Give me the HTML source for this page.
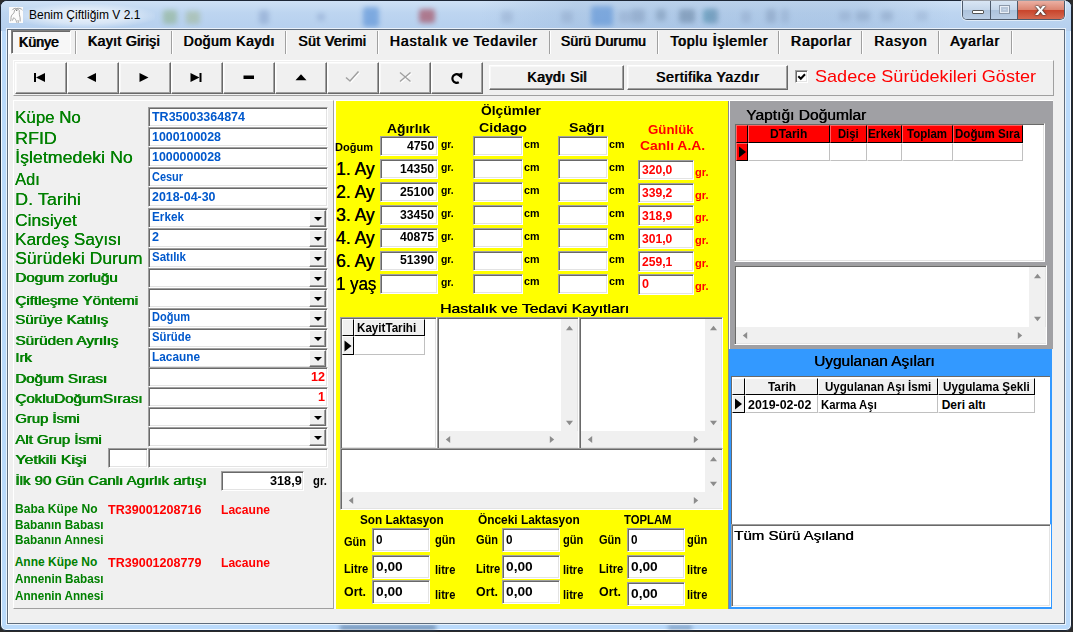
<!DOCTYPE html>
<html lang="tr"><head><meta charset="utf-8"><title>Benim Çiftliğim V 2.1</title>
<style>
html,body{margin:0;padding:0;}
body{width:1073px;height:632px;overflow:hidden;position:relative;background:#2b2b2b;font-family:"Liberation Sans",sans-serif;}
div{position:absolute;box-sizing:border-box;}
.t{position:absolute;white-space:nowrap;transform-origin:0 50%;display:block;}
.win{background:#badafb;border:1px solid #1d2736;border-radius:7px 7px 6px 6px;box-shadow:inset 0 0 0 1px rgba(255,255,255,.85);overflow:hidden;}
.client{background:#f0f0f0;border:1px solid #5f6c7c;box-shadow:0 0 0 1px rgba(255,255,255,.7);}
.sunk{background:#fff;border:1px solid;border-color:#a0a0a0 #fff #fff #a0a0a0;box-shadow:inset 1px 1px 0 #696969,inset -1px -1px 0 #e3e3e3;}
.raised{background:#f0f0f0;border:1px solid;border-color:#fff #696969 #696969 #fff;box-shadow:inset -1px -1px 0 #a0a0a0;}
.btn{background:#f0f0f0;border:1px solid;border-color:#fff #696969 #696969 #fff;box-shadow:inset -1px -1px 0 #a0a0a0,inset 1px 1px 0 #f8f8f8;}
.cb{background:#f0f0f0;border:1px solid;border-color:#fff #696969 #696969 #fff;box-shadow:inset -1px -1px 0 #a0a0a0;}
.cb:after{content:"";position:absolute;left:4px;top:6px;border:4px solid transparent;border-top:4px solid #000;border-bottom:0;}
.panel{border:1px solid;border-color:#fff #a0a0a0 #a0a0a0 #fff;}
.hcell{background:#f0f0f0;border:1px solid;border-color:#fff #000 #000 #fff;}
.cell{background:#fff;border:1px solid;border-color:#fff #c0c0c0 #c0c0c0 #fff;}
.sb{background:#f0f0f0;}

</style></head>
<body>
<div class="win" style="left:0px;top:0px;width:1072px;height:631px;"><div style="left:0;top:0;width:1072px;height:30px;background:linear-gradient(180deg,#cfe1f5 0%,#bdd5f0 40%,#b5cfee 100%);"></div><div style="left:480px;top:0;width:470px;height:30px;background:linear-gradient(90deg,rgba(150,180,215,0),rgba(150,180,215,.35) 20%,rgba(150,180,215,.35) 80%,rgba(150,180,215,0));"></div><div style="left:162px;top:9px;width:14px;height:14px;background:#6f9a4a;opacity:0.35;filter:blur(2.5px);border-radius:3px;"></div><div style="left:185px;top:10px;width:14px;height:13px;background:#8aa04a;opacity:0.3;filter:blur(2.5px);border-radius:3px;"></div><div style="left:258px;top:9px;width:10px;height:14px;background:#6a85b5;opacity:0.35;filter:blur(2.5px);border-radius:3px;"></div><div style="left:316px;top:12px;width:8px;height:8px;background:#6a85b5;opacity:0.3;filter:blur(2.5px);border-radius:3px;"></div><div style="left:362px;top:6px;width:16px;height:20px;background:#3f7fd0;opacity:0.5;filter:blur(2.5px);border-radius:3px;"></div><div style="left:418px;top:8px;width:16px;height:14px;background:#a03040;opacity:0.55;filter:blur(2.5px);border-radius:3px;"></div><div style="left:500px;top:10px;width:12px;height:12px;background:#7f95b8;opacity:0.3;filter:blur(2.5px);border-radius:3px;"></div><div style="left:560px;top:10px;width:12px;height:12px;background:#7f95b8;opacity:0.3;filter:blur(2.5px);border-radius:3px;"></div><div style="left:618px;top:10px;width:12px;height:12px;background:#7f95b8;opacity:0.3;filter:blur(2.5px);border-radius:3px;"></div><div style="left:590px;top:5px;width:22px;height:20px;background:#3f7fd0;opacity:0.45;filter:blur(2.5px);border-radius:3px;"></div><div style="left:630px;top:8px;width:14px;height:14px;background:#6f86a8;opacity:0.35;filter:blur(2.5px);border-radius:3px;"></div><div style="left:655px;top:8px;width:10px;height:12px;background:#5f7a98;opacity:0.35;filter:blur(2.5px);border-radius:3px;"></div><div style="left:678px;top:8px;width:16px;height:14px;background:#4f6a88;opacity:0.4;filter:blur(2.5px);border-radius:3px;"></div><div style="left:702px;top:8px;width:14px;height:14px;background:#2f7a9a;opacity:0.45;filter:blur(2.5px);border-radius:3px;"></div><div style="left:740px;top:10px;width:10px;height:12px;background:#7f95b8;opacity:0.3;filter:blur(2.5px);border-radius:3px;"></div><div style="left:765px;top:8px;width:10px;height:14px;background:#6f86a8;opacity:0.35;filter:blur(2.5px);border-radius:3px;"></div><div style="left:855px;top:10px;width:14px;height:10px;background:#6f86a8;opacity:0.3;filter:blur(2.5px);border-radius:3px;"></div><div style="left:880px;top:10px;width:12px;height:10px;background:#6f86a8;opacity:0.3;filter:blur(2.5px);border-radius:3px;"></div><div style="left:708px;top:8px;width:10px;height:14px;background:#7f95b8;opacity:0.3;filter:blur(2.5px);border-radius:3px;"></div><div style="left:780px;top:8px;width:8px;height:14px;background:#7f95b8;opacity:0.3;filter:blur(2.5px);border-radius:3px;"></div><div style="left:838px;top:10px;width:12px;height:10px;background:#7f95b8;opacity:0.3;filter:blur(2.5px);border-radius:3px;"></div><div style="left:915px;top:10px;width:12px;height:10px;background:#7f95b8;opacity:0.25;filter:blur(2.5px);border-radius:3px;"></div><div style="left:14px;top:3px;width:140px;height:24px;background:radial-gradient(ellipse at center,rgba(255,255,255,.75) 0%,rgba(255,255,255,.45) 45%,rgba(255,255,255,0) 75%);"></div></div>
<div class="" style="left:962px;top:1px;width:103px;height:19px;border:1px solid #4d5a6b;border-top:none;border-radius:0 0 5px 5px;overflow:hidden;background:#c3d6ec;box-shadow:0 0 0 1px rgba(255,255,255,.55);"><div style="left:0;top:0;width:28px;height:19px;background:linear-gradient(180deg,#d9e6f4 0%,#c6d7ea 45%,#adc3dc 50%,#bccfe6 100%);border-right:1px solid #4d5a6b;"></div><div style="left:28px;top:0;width:27px;height:19px;background:linear-gradient(180deg,#d9e6f4 0%,#c6d7ea 45%,#adc3dc 50%,#bccfe6 100%);border-right:1px solid #4d5a6b;"></div><div style="left:55px;top:0;width:47px;height:19px;background:linear-gradient(180deg,#ebb0a3 0%,#dc8672 45%,#c9452c 50%,#d66e55 100%);"></div><div style="left:9px;top:9px;width:12px;height:4px;background:#fff;border:1px solid #555;border-radius:1px;"></div><div style="left:36px;top:4px;width:11px;height:9px;border:1px solid #8c99aa;box-shadow:inset 0 0 0 1px #e8eef6, inset 0 0 0 3px #b7c6d9;"></div></div>
<span class="t" style="left:1034.50px;top:1px;font-size:16px;line-height:17px;color:#fff;font-weight:bold;transform:scaleX(1.2362);text-shadow:0 0 1px #333,0 0 1px #333,0 0 2px #333;">x</span>
<svg style="position:absolute;left:9px;top:7px" width="14" height="16" viewBox="0 0 14 16"><rect x="0" y="0" width="14" height="16" fill="#fbfbfb"/><path d="M7.5 1.5C6 1 4 1.8 3.2 3.2M7.5 1.5C9.5 .8 12.5 1.6 13.5 3.2M6 2.8C7 1.6 9.5 1.8 10.2 3.4C10.6 5 10 6.2 10.4 7.5C11 9.5 11.4 12 11.2 14.5M5.8 3C5 4.6 5.4 5.6 4.4 6.6C2.6 7.6 1.8 9.6 2 12.2L1.6 14.2M4.6 10.6L3.4 13.6M5.2 10.8C6 12 7 12.6 7.4 14.4L8 15.8M9 13L9.4 15.8" fill="none" stroke="#8e8e8e" stroke-width=".8"/><circle cx="7.7" cy="3.4" r=".7" fill="#777"/></svg>
<span class="t" style="left:29.00px;top:8px;font-size:12px;line-height:14px;color:#000;">Benim Çiftliğim V 2.1</span>
<div class="" style="left:340px;top:625px;width:96px;height:5px;background:rgba(55,85,125,.55);filter:blur(2px);"></div>
<div class="" style="left:668px;top:625px;width:24px;height:5px;background:rgba(55,85,125,.4);filter:blur(2px);"></div>
<div class="client" style="left:7px;top:29px;width:1058px;height:595px;"></div>
<div class="" style="left:8px;top:30px;width:1px;height:593px;background:#fff;"></div>
<div class="" style="left:8px;top:30px;width:3px;height:24px;background:#fff;"></div>
<div class="" style="left:11px;top:30px;width:60px;height:24px;border:1px solid;border-color:#808080 #fff #fff #808080;box-shadow:inset 1px 1px 0 #696969;background:#f7f7f7;"></div>
<span class="t" style="left:18.60px;top:34px;font-size:14px;line-height:16px;color:#000;letter-spacing:0.076px;text-shadow:0.8px 0 0 #000;">Künye</span>
<span class="t" style="left:87.60px;top:33px;font-size:14px;line-height:16px;color:#000;letter-spacing:0.366px;text-shadow:0.8px 0 0 #000;">Kayıt Girişi</span>
<span class="t" style="left:183.20px;top:33px;font-size:14px;line-height:16px;color:#000;letter-spacing:0.598px;text-shadow:0.8px 0 0 #000;">Doğum Kaydı</span>
<span class="t" style="left:298.00px;top:33px;font-size:14px;line-height:16px;color:#000;letter-spacing:0.422px;text-shadow:0.8px 0 0 #000;">Süt Verimi</span>
<span class="t" style="left:389.50px;top:33px;font-size:14px;line-height:16px;color:#000;letter-spacing:0.914px;text-shadow:0.8px 0 0 #000;">Hastalık ve Tedaviler</span>
<span class="t" style="left:560.40px;top:33px;font-size:14px;line-height:16px;color:#000;letter-spacing:0.195px;text-shadow:0.8px 0 0 #000;">Sürü Durumu</span>
<span class="t" style="left:670.00px;top:33px;font-size:14px;line-height:16px;color:#000;letter-spacing:0.833px;text-shadow:0.8px 0 0 #000;">Toplu İşlemler</span>
<span class="t" style="left:790.60px;top:33px;font-size:14px;line-height:16px;color:#000;letter-spacing:0.930px;text-shadow:0.8px 0 0 #000;">Raporlar</span>
<span class="t" style="left:874.00px;top:33px;font-size:14px;line-height:16px;color:#000;letter-spacing:0.946px;text-shadow:0.8px 0 0 #000;">Rasyon</span>
<span class="t" style="left:950.00px;top:33px;font-size:14px;line-height:16px;color:#000;letter-spacing:0.785px;text-shadow:0.8px 0 0 #000;">Ayarlar</span>
<div class="" style="left:75px;top:31px;width:2px;height:23px;border-left:1px solid #a0a0a0;border-right:1px solid #fff;"></div>
<div class="" style="left:171px;top:31px;width:2px;height:23px;border-left:1px solid #a0a0a0;border-right:1px solid #fff;"></div>
<div class="" style="left:285px;top:31px;width:2px;height:23px;border-left:1px solid #a0a0a0;border-right:1px solid #fff;"></div>
<div class="" style="left:377px;top:31px;width:2px;height:23px;border-left:1px solid #a0a0a0;border-right:1px solid #fff;"></div>
<div class="" style="left:549px;top:31px;width:2px;height:23px;border-left:1px solid #a0a0a0;border-right:1px solid #fff;"></div>
<div class="" style="left:657px;top:31px;width:2px;height:23px;border-left:1px solid #a0a0a0;border-right:1px solid #fff;"></div>
<div class="" style="left:778px;top:31px;width:2px;height:23px;border-left:1px solid #a0a0a0;border-right:1px solid #fff;"></div>
<div class="" style="left:861px;top:31px;width:2px;height:23px;border-left:1px solid #a0a0a0;border-right:1px solid #fff;"></div>
<div class="" style="left:938px;top:31px;width:2px;height:23px;border-left:1px solid #a0a0a0;border-right:1px solid #fff;"></div>
<div class="" style="left:1011px;top:31px;width:2px;height:23px;border-left:1px solid #a0a0a0;border-right:1px solid #fff;"></div>
<div class="panel" style="left:13px;top:60px;width:1041px;height:36px;"></div>
<div class="btn" style="left:15px;top:62px;width:52px;height:32px;"></div>
<div class="btn" style="left:67px;top:62px;width:52px;height:32px;"></div>
<div class="btn" style="left:119px;top:62px;width:52px;height:32px;"></div>
<div class="btn" style="left:171px;top:62px;width:52px;height:32px;"></div>
<div class="btn" style="left:223px;top:62px;width:52px;height:32px;"></div>
<div class="btn" style="left:275px;top:62px;width:52px;height:32px;"></div>
<div class="btn" style="left:327px;top:62px;width:52px;height:32px;"></div>
<div class="btn" style="left:379px;top:62px;width:52px;height:32px;"></div>
<div class="btn" style="left:431px;top:62px;width:52px;height:32px;"></div>
<svg style="position:absolute;left:0px;top:0px" width="1073" height="632" viewBox="0 0 1073 632"><rect x="34" y="73" width="2" height="9" fill="#000"/><path d="M36 77.5L45 73V82Z" fill="#000"/><path d="M87 77.5L96 73V82Z" fill="#000"/><path d="M148.5 77.5L139.5 73V82Z" fill="#000"/><path d="M199.5 77.5L190.5 73V82Z" fill="#000"/><rect x="199.5" y="73" width="2" height="9" fill="#000"/><rect x="243.5" y="75.5" width="10.5" height="3.5" fill="#000"/><path d="M295.5 80.3H306.5L301 74.3Z" fill="#000"/><path d="M347 78.5L351 82L359.5 72.5" fill="none" stroke="#fff" stroke-width="1.5"/><path d="M346 77.5L350 81L358.5 71.5" fill="none" stroke="#a0a0a0" stroke-width="1.5"/><path d="M401 73.5L411.5 82.5M411.5 73.5L401 82.5" fill="none" stroke="#fff" stroke-width="1.4"/><path d="M400 72.5L410.5 81.5M410.5 72.5L400 81.5" fill="none" stroke="#a0a0a0" stroke-width="1.4"/><path d="M458.8 82.2A4.3 4.3 0 1 1 460.5 76.5" fill="none" stroke="#000" stroke-width="2.2"/><path d="M456.5 74.5L462.5 72.5L462 79Z" fill="#000"/></svg>
<div class="btn" style="left:489px;top:65px;width:135px;height:25px;"></div>
<div class="btn" style="left:627px;top:65px;width:161px;height:25px;"></div>
<span class="t" style="left:527.00px;top:69px;font-size:14px;line-height:16px;color:#000;letter-spacing:0.494px;text-shadow:0.8px 0 0 #000;">Kaydı Sil</span>
<span class="t" style="left:655.80px;top:69px;font-size:14px;line-height:16px;color:#000;letter-spacing:0.611px;text-shadow:0.8px 0 0 #000;">Sertifika Yazdır</span>
<div class="sunk" style="left:795px;top:70px;width:13px;height:13px;"></div>
<span class="t" style="left:815.00px;top:67px;font-size:17px;line-height:19px;color:#ff0000;transform:scaleX(1.0631);">Sadece Sürüdekileri Göster</span>
<div class="panel" style="left:13px;top:100px;width:321px;height:509px;"></div>
<span class="t" style="left:15.20px;top:108px;font-size:16.7px;line-height:19px;color:#008000;transform:scaleX(1.0109);text-shadow:0.3px 0 0 #008000;">Küpe No</span>
<span class="t" style="left:15.20px;top:129px;font-size:16.7px;line-height:19px;color:#008000;transform:scaleX(1.0703);text-shadow:0.3px 0 0 #008000;">RFID</span>
<span class="t" style="left:15.20px;top:148px;font-size:16.7px;line-height:19px;color:#008000;transform:scaleX(1.0657);text-shadow:0.3px 0 0 #008000;">İşletmedeki No</span>
<span class="t" style="left:15.20px;top:170px;font-size:16.7px;line-height:19px;color:#008000;transform:scaleX(0.9854);text-shadow:0.3px 0 0 #008000;">Adı</span>
<span class="t" style="left:15.20px;top:190px;font-size:16.7px;line-height:19px;color:#008000;transform:scaleX(1.0780);text-shadow:0.3px 0 0 #008000;">D. Tarihi</span>
<span class="t" style="left:15.20px;top:211px;font-size:16.7px;line-height:19px;color:#008000;transform:scaleX(1.0388);text-shadow:0.3px 0 0 #008000;">Cinsiyet</span>
<span class="t" style="left:15.20px;top:230px;font-size:16.7px;line-height:19px;color:#008000;transform:scaleX(1.0225);text-shadow:0.3px 0 0 #008000;">Kardeş Sayısı</span>
<span class="t" style="left:15.20px;top:249px;font-size:16.7px;line-height:19px;color:#008000;transform:scaleX(1.0559);text-shadow:0.3px 0 0 #008000;">Sürüdeki Durum</span>
<span class="t" style="left:15.20px;top:270px;font-size:13.7px;line-height:15px;color:#008000;transform:scaleX(1.1023);text-shadow:0.8px 0 0 #008000;">Dogum zorluğu</span>
<span class="t" style="left:15.20px;top:293px;font-size:13.7px;line-height:15px;color:#008000;transform:scaleX(1.1072);text-shadow:0.8px 0 0 #008000;">Çiftleşme Yöntemi</span>
<span class="t" style="left:15.20px;top:312px;font-size:13.7px;line-height:15px;color:#008000;transform:scaleX(1.0882);text-shadow:0.8px 0 0 #008000;">Sürüye Katılış</span>
<span class="t" style="left:15.20px;top:333px;font-size:13.7px;line-height:15px;color:#008000;transform:scaleX(1.1138);text-shadow:0.8px 0 0 #008000;">Sürüden Ayrılış</span>
<span class="t" style="left:15.20px;top:350px;font-size:13.7px;line-height:15px;color:#008000;transform:scaleX(1.0908);text-shadow:0.8px 0 0 #008000;">Irk</span>
<span class="t" style="left:15.20px;top:371px;font-size:13.7px;line-height:15px;color:#008000;transform:scaleX(1.0961);text-shadow:0.8px 0 0 #008000;">Doğum Sırası</span>
<span class="t" style="left:15.20px;top:391px;font-size:13.7px;line-height:15px;color:#008000;transform:scaleX(1.1073);text-shadow:0.8px 0 0 #008000;">ÇokluDoğumSırası</span>
<span class="t" style="left:15.20px;top:411px;font-size:13.7px;line-height:15px;color:#008000;transform:scaleX(1.0829);text-shadow:0.8px 0 0 #008000;">Grup İsmi</span>
<span class="t" style="left:15.20px;top:432px;font-size:13.7px;line-height:15px;color:#008000;transform:scaleX(1.0913);text-shadow:0.8px 0 0 #008000;">Alt Grup İsmi</span>
<span class="t" style="left:15.20px;top:452px;font-size:13.7px;line-height:15px;color:#008000;transform:scaleX(1.1624);text-shadow:0.8px 0 0 #008000;">Yetkili Kişi</span>
<div class="sunk" style="left:148px;top:107px;width:180px;height:20px;"></div>
<span class="t" style="left:152.00px;top:110px;font-size:12px;line-height:14px;color:#0058cc;font-weight:bold;transform:scaleX(1.0402);">TR35003364874</span>
<div class="sunk" style="left:148px;top:127px;width:180px;height:20px;"></div>
<span class="t" style="left:152.00px;top:130px;font-size:12px;line-height:14px;color:#0058cc;font-weight:bold;transform:scaleX(1.0339);">1000100028</span>
<div class="sunk" style="left:148px;top:147px;width:180px;height:20px;"></div>
<span class="t" style="left:152.00px;top:150px;font-size:12px;line-height:14px;color:#0058cc;font-weight:bold;transform:scaleX(1.0339);">1000000028</span>
<div class="sunk" style="left:148px;top:167px;width:180px;height:20px;"></div>
<span class="t" style="left:152.00px;top:170px;font-size:12px;line-height:14px;color:#0058cc;font-weight:bold;transform:scaleX(0.9114);">Cesur</span>
<div class="sunk" style="left:148px;top:187px;width:180px;height:20px;"></div>
<span class="t" style="left:152.00px;top:190px;font-size:12px;line-height:14px;color:#0058cc;font-weight:bold;transform:scaleX(1.0345);">2018-04-30</span>
<div class="sunk" style="left:148px;top:208px;width:180px;height:20px;"></div>
<div class="cb" style="left:309px;top:210px;width:17px;height:17px;"></div>
<span class="t" style="left:152.00px;top:210px;font-size:12px;line-height:14px;color:#0058cc;font-weight:bold;transform:scaleX(0.9787);">Erkek</span>
<div class="sunk" style="left:148px;top:228px;width:180px;height:20px;"></div>
<div class="cb" style="left:309px;top:230px;width:17px;height:17px;"></div>
<span class="t" style="left:152.00px;top:230px;font-size:12px;line-height:14px;color:#0058cc;font-weight:bold;transform:scaleX(1.0489);">2</span>
<div class="sunk" style="left:148px;top:248px;width:180px;height:20px;"></div>
<div class="cb" style="left:309px;top:250px;width:17px;height:17px;"></div>
<span class="t" style="left:152.00px;top:250px;font-size:12px;line-height:14px;color:#0058cc;font-weight:bold;transform:scaleX(0.9618);">Satılık</span>
<div class="sunk" style="left:148px;top:268px;width:180px;height:20px;"></div>
<div class="cb" style="left:309px;top:270px;width:17px;height:17px;"></div>
<div class="sunk" style="left:148px;top:288px;width:180px;height:20px;"></div>
<div class="cb" style="left:309px;top:290px;width:17px;height:17px;"></div>
<div class="sunk" style="left:148px;top:308px;width:180px;height:20px;"></div>
<div class="cb" style="left:309px;top:310px;width:17px;height:17px;"></div>
<span class="t" style="left:152.00px;top:310px;font-size:12px;line-height:14px;color:#0058cc;font-weight:bold;transform:scaleX(0.9195);">Doğum</span>
<div class="sunk" style="left:148px;top:328px;width:180px;height:20px;"></div>
<div class="cb" style="left:309px;top:330px;width:17px;height:17px;"></div>
<span class="t" style="left:152.00px;top:330px;font-size:12px;line-height:14px;color:#0058cc;font-weight:bold;transform:scaleX(0.9435);">Sürüde</span>
<div class="sunk" style="left:148px;top:348px;width:180px;height:20px;"></div>
<div class="cb" style="left:309px;top:350px;width:17px;height:17px;"></div>
<span class="t" style="left:152.00px;top:350px;font-size:12px;line-height:14px;color:#0058cc;font-weight:bold;transform:scaleX(0.9860);">Lacaune</span>
<div class="sunk" style="left:148px;top:367px;width:180px;height:20px;"></div>
<span class="t" style="left:310.50px;top:370px;font-size:12px;line-height:14px;color:#ff0000;font-weight:bold;transform:scaleX(1.0489);">12</span>
<div class="sunk" style="left:148px;top:387px;width:180px;height:20px;"></div>
<span class="t" style="left:317.50px;top:390px;font-size:12px;line-height:14px;color:#ff0000;font-weight:bold;transform:scaleX(1.0489);">1</span>
<div class="sunk" style="left:148px;top:407px;width:180px;height:20px;"></div>
<div class="cb" style="left:309px;top:409px;width:17px;height:17px;"></div>
<div class="sunk" style="left:148px;top:427px;width:180px;height:20px;"></div>
<div class="cb" style="left:309px;top:429px;width:17px;height:17px;"></div>
<div class="sunk" style="left:108px;top:448px;width:40px;height:20px;"></div>
<div class="sunk" style="left:148px;top:448px;width:180px;height:20px;"></div>
<span class="t" style="left:15.20px;top:473px;font-size:13.7px;line-height:15px;color:#008000;transform:scaleX(1.0983);text-shadow:0.8px 0 0 #008000;">İlk 90 Gün Canlı Agırlık artışı</span>
<div class="sunk" style="left:221px;top:471px;width:83px;height:20px;"></div>
<span class="t" style="left:269.80px;top:473px;font-size:13.5px;line-height:15px;color:#000;font-weight:bold;transform:scaleX(0.9384);">318,9</span>
<span class="t" style="left:312.50px;top:473px;font-size:13.5px;line-height:15px;color:#000;font-weight:bold;transform:scaleX(0.8361);">gr.</span>
<span class="t" style="left:14.70px;top:502px;font-size:12px;line-height:14px;color:#008000;font-weight:bold;transform:scaleX(1.0060);">Baba Küpe No</span>
<span class="t" style="left:14.70px;top:518px;font-size:12px;line-height:14px;color:#008000;font-weight:bold;transform:scaleX(0.9831);">Babanın Babası</span>
<span class="t" style="left:14.70px;top:533px;font-size:12px;line-height:14px;color:#008000;font-weight:bold;transform:scaleX(0.9808);">Babanın Annesi</span>
<span class="t" style="left:14.70px;top:555px;font-size:12px;line-height:14px;color:#008000;font-weight:bold;">Anne Küpe No</span>
<span class="t" style="left:14.70px;top:572px;font-size:12px;line-height:14px;color:#008000;font-weight:bold;transform:scaleX(0.9760);">Annenin Babası</span>
<span class="t" style="left:14.70px;top:589px;font-size:12px;line-height:14px;color:#008000;font-weight:bold;transform:scaleX(0.9737);">Annenin Annesi</span>
<span class="t" style="left:107.80px;top:503px;font-size:12px;line-height:14px;color:#ff0000;font-weight:bold;transform:scaleX(1.0447);">TR39001208716</span>
<span class="t" style="left:221.00px;top:503px;font-size:12px;line-height:14px;color:#ff0000;font-weight:bold;transform:scaleX(1.0065);">Lacaune</span>
<span class="t" style="left:107.80px;top:556px;font-size:12px;line-height:14px;color:#ff0000;font-weight:bold;transform:scaleX(1.0447);">TR39001208779</span>
<span class="t" style="left:221.00px;top:556px;font-size:12px;line-height:14px;color:#ff0000;font-weight:bold;transform:scaleX(1.0065);">Lacaune</span>
<div class="" style="left:334px;top:100px;width:719px;height:1px;background:#fff;"></div>
<div class="" style="left:334px;top:100px;width:2px;height:509px;background:#fff;"></div>
<div class="" style="left:336px;top:101px;width:392px;height:508px;background:#ffff00;"></div>
<div class="" style="left:728px;top:101px;width:1px;height:508px;background:#8a8a90;"></div>
<div class="" style="left:729px;top:100px;width:1px;height:250px;background:#fff;"></div>
<span class="t" style="left:480.60px;top:103px;font-size:13px;line-height:15px;color:#000;font-weight:bold;transform:scaleX(1.0647);">Ölçümler</span>
<span class="t" style="left:387.40px;top:121px;font-size:13px;line-height:15px;color:#000;font-weight:bold;transform:scaleX(1.0679);">Ağırlık</span>
<span class="t" style="left:479.00px;top:120px;font-size:13px;line-height:15px;color:#000;font-weight:bold;transform:scaleX(1.0896);">Cidago</span>
<span class="t" style="left:569.00px;top:120px;font-size:13px;line-height:15px;color:#000;font-weight:bold;transform:scaleX(1.0919);">Sağrı</span>
<span class="t" style="left:648.20px;top:122px;font-size:13px;line-height:15px;color:#ff0000;font-weight:bold;transform:scaleX(1.0184);">Günlük</span>
<span class="t" style="left:639.80px;top:138px;font-size:13px;line-height:15px;color:#ff0000;font-weight:bold;transform:scaleX(1.0704);">Canlı A.A.</span>
<span class="t" style="left:335.20px;top:141px;font-size:11.5px;line-height:12px;color:#000;font-weight:bold;transform:scaleX(0.9595);">Doğum</span>
<div class="sunk" style="left:380px;top:136px;width:58px;height:20px;"></div>
<span class="t" style="left:406.80px;top:139px;font-size:12.5px;line-height:14px;color:#000;font-weight:bold;transform:scaleX(0.9782);">4750</span>
<span class="t" style="left:441.30px;top:138px;font-size:10.5px;line-height:12px;color:#000;font-weight:bold;transform:scaleX(0.9893);">gr.</span>
<div class="sunk" style="left:473px;top:136px;width:50px;height:20px;"></div>
<span class="t" style="left:524.00px;top:138px;font-size:10.5px;line-height:12px;color:#000;font-weight:bold;transform:scaleX(1.0214);">cm</span>
<div class="sunk" style="left:558px;top:136px;width:50px;height:20px;"></div>
<span class="t" style="left:609.00px;top:138px;font-size:10.5px;line-height:12px;color:#000;font-weight:bold;transform:scaleX(1.0214);">cm</span>
<span class="t" style="left:336.00px;top:159px;font-size:17.5px;line-height:20px;color:#000;text-shadow:0.25px 0 0 #000;">1. Ay</span>
<div class="sunk" style="left:380px;top:159px;width:58px;height:20px;"></div>
<span class="t" style="left:400.00px;top:162px;font-size:12.5px;line-height:14px;color:#000;font-weight:bold;transform:scaleX(0.9782);">14350</span>
<span class="t" style="left:441.30px;top:161px;font-size:10.5px;line-height:12px;color:#000;font-weight:bold;transform:scaleX(0.9893);">gr.</span>
<div class="sunk" style="left:473px;top:159px;width:50px;height:20px;"></div>
<span class="t" style="left:524.00px;top:161px;font-size:10.5px;line-height:12px;color:#000;font-weight:bold;transform:scaleX(1.0214);">cm</span>
<div class="sunk" style="left:558px;top:159px;width:50px;height:20px;"></div>
<span class="t" style="left:609.00px;top:161px;font-size:10.5px;line-height:12px;color:#000;font-weight:bold;transform:scaleX(1.0214);">cm</span>
<div class="sunk" style="left:638px;top:160px;width:56px;height:20px;"></div>
<span class="t" style="left:642.30px;top:162px;font-size:13px;line-height:15px;color:#ff0000;font-weight:bold;transform:scaleX(0.9314);">320,0</span>
<span class="t" style="left:694.80px;top:166px;font-size:10.5px;line-height:12px;color:#ff0000;font-weight:bold;transform:scaleX(1.0516);">gr.</span>
<span class="t" style="left:336.00px;top:182px;font-size:17.5px;line-height:20px;color:#000;text-shadow:0.25px 0 0 #000;">2. Ay</span>
<div class="sunk" style="left:380px;top:182px;width:58px;height:20px;"></div>
<span class="t" style="left:400.00px;top:185px;font-size:12.5px;line-height:14px;color:#000;font-weight:bold;transform:scaleX(0.9782);">25100</span>
<span class="t" style="left:441.30px;top:184px;font-size:10.5px;line-height:12px;color:#000;font-weight:bold;transform:scaleX(0.9893);">gr.</span>
<div class="sunk" style="left:473px;top:182px;width:50px;height:20px;"></div>
<span class="t" style="left:524.00px;top:184px;font-size:10.5px;line-height:12px;color:#000;font-weight:bold;transform:scaleX(1.0214);">cm</span>
<div class="sunk" style="left:558px;top:182px;width:50px;height:20px;"></div>
<span class="t" style="left:609.00px;top:184px;font-size:10.5px;line-height:12px;color:#000;font-weight:bold;transform:scaleX(1.0214);">cm</span>
<div class="sunk" style="left:638px;top:183px;width:56px;height:20px;"></div>
<span class="t" style="left:642.30px;top:185px;font-size:13px;line-height:15px;color:#ff0000;font-weight:bold;transform:scaleX(0.9314);">339,2</span>
<span class="t" style="left:694.80px;top:189px;font-size:10.5px;line-height:12px;color:#ff0000;font-weight:bold;transform:scaleX(1.0516);">gr.</span>
<span class="t" style="left:336.00px;top:205px;font-size:17.5px;line-height:20px;color:#000;text-shadow:0.25px 0 0 #000;">3. Ay</span>
<div class="sunk" style="left:380px;top:205px;width:58px;height:20px;"></div>
<span class="t" style="left:400.00px;top:208px;font-size:12.5px;line-height:14px;color:#000;font-weight:bold;transform:scaleX(0.9782);">33450</span>
<span class="t" style="left:441.30px;top:207px;font-size:10.5px;line-height:12px;color:#000;font-weight:bold;transform:scaleX(0.9893);">gr.</span>
<div class="sunk" style="left:473px;top:205px;width:50px;height:20px;"></div>
<span class="t" style="left:524.00px;top:207px;font-size:10.5px;line-height:12px;color:#000;font-weight:bold;transform:scaleX(1.0214);">cm</span>
<div class="sunk" style="left:558px;top:205px;width:50px;height:20px;"></div>
<span class="t" style="left:609.00px;top:207px;font-size:10.5px;line-height:12px;color:#000;font-weight:bold;transform:scaleX(1.0214);">cm</span>
<div class="sunk" style="left:638px;top:205px;width:56px;height:21px;"></div>
<span class="t" style="left:642.30px;top:208px;font-size:13px;line-height:15px;color:#ff0000;font-weight:bold;transform:scaleX(0.9314);">318,9</span>
<span class="t" style="left:694.80px;top:211px;font-size:10.5px;line-height:12px;color:#ff0000;font-weight:bold;transform:scaleX(1.0516);">gr.</span>
<span class="t" style="left:336.00px;top:228px;font-size:17.5px;line-height:20px;color:#000;text-shadow:0.25px 0 0 #000;">4. Ay</span>
<div class="sunk" style="left:380px;top:228px;width:58px;height:20px;"></div>
<span class="t" style="left:400.00px;top:230px;font-size:12.5px;line-height:14px;color:#000;font-weight:bold;transform:scaleX(0.9782);">40875</span>
<span class="t" style="left:441.30px;top:230px;font-size:10.5px;line-height:12px;color:#000;font-weight:bold;transform:scaleX(0.9893);">gr.</span>
<div class="sunk" style="left:473px;top:228px;width:50px;height:20px;"></div>
<span class="t" style="left:524.00px;top:230px;font-size:10.5px;line-height:12px;color:#000;font-weight:bold;transform:scaleX(1.0214);">cm</span>
<div class="sunk" style="left:558px;top:228px;width:50px;height:20px;"></div>
<span class="t" style="left:609.00px;top:230px;font-size:10.5px;line-height:12px;color:#000;font-weight:bold;transform:scaleX(1.0214);">cm</span>
<div class="sunk" style="left:638px;top:228px;width:56px;height:21px;"></div>
<span class="t" style="left:642.30px;top:231px;font-size:13px;line-height:15px;color:#ff0000;font-weight:bold;transform:scaleX(0.9314);">301,0</span>
<span class="t" style="left:694.80px;top:234px;font-size:10.5px;line-height:12px;color:#ff0000;font-weight:bold;transform:scaleX(1.0516);">gr.</span>
<span class="t" style="left:336.00px;top:251px;font-size:17.5px;line-height:20px;color:#000;text-shadow:0.25px 0 0 #000;">6. Ay</span>
<div class="sunk" style="left:380px;top:251px;width:58px;height:20px;"></div>
<span class="t" style="left:400.00px;top:253px;font-size:12.5px;line-height:14px;color:#000;font-weight:bold;transform:scaleX(0.9782);">51390</span>
<span class="t" style="left:441.30px;top:253px;font-size:10.5px;line-height:12px;color:#000;font-weight:bold;transform:scaleX(0.9893);">gr.</span>
<div class="sunk" style="left:473px;top:251px;width:50px;height:20px;"></div>
<span class="t" style="left:524.00px;top:253px;font-size:10.5px;line-height:12px;color:#000;font-weight:bold;transform:scaleX(1.0214);">cm</span>
<div class="sunk" style="left:558px;top:251px;width:50px;height:20px;"></div>
<span class="t" style="left:609.00px;top:253px;font-size:10.5px;line-height:12px;color:#000;font-weight:bold;transform:scaleX(1.0214);">cm</span>
<div class="sunk" style="left:638px;top:251px;width:56px;height:21px;"></div>
<span class="t" style="left:642.30px;top:254px;font-size:13px;line-height:15px;color:#ff0000;font-weight:bold;transform:scaleX(0.9314);">259,1</span>
<span class="t" style="left:694.80px;top:257px;font-size:10.5px;line-height:12px;color:#ff0000;font-weight:bold;transform:scaleX(1.0516);">gr.</span>
<span class="t" style="left:336.00px;top:274px;font-size:17.5px;line-height:20px;color:#000;transform:scaleX(0.9623);text-shadow:0.25px 0 0 #000;">1 yaş</span>
<div class="sunk" style="left:380px;top:274px;width:58px;height:20px;"></div>
<span class="t" style="left:441.30px;top:276px;font-size:10.5px;line-height:12px;color:#000;font-weight:bold;transform:scaleX(0.9893);">gr.</span>
<div class="sunk" style="left:473px;top:274px;width:50px;height:20px;"></div>
<span class="t" style="left:524.00px;top:275px;font-size:10.5px;line-height:12px;color:#000;font-weight:bold;transform:scaleX(1.0214);">cm</span>
<div class="sunk" style="left:558px;top:274px;width:50px;height:20px;"></div>
<span class="t" style="left:609.00px;top:275px;font-size:10.5px;line-height:12px;color:#000;font-weight:bold;transform:scaleX(1.0214);">cm</span>
<div class="sunk" style="left:638px;top:274px;width:56px;height:21px;"></div>
<span class="t" style="left:642.30px;top:276px;font-size:13px;line-height:15px;color:#ff0000;font-weight:bold;transform:scaleX(0.9682);">0</span>
<span class="t" style="left:694.80px;top:280px;font-size:10.5px;line-height:12px;color:#ff0000;font-weight:bold;transform:scaleX(1.0516);">gr.</span>
<span class="t" style="left:439.80px;top:301px;font-size:13.5px;line-height:15px;color:#000;transform:scaleX(1.1626);text-shadow:0.4px 0 0 #000;">Hastalık ve Tedavi Kayıtları</span>
<div class="sunk" style="left:340px;top:317px;width:97px;height:132px;"></div>
<div class="hcell" style="left:342px;top:319px;width:12px;height:17px;"></div>
<div class="hcell" style="left:354px;top:319px;width:71px;height:17px;"></div>
<span class="t" style="left:356.90px;top:321px;font-size:12px;line-height:14px;color:#000;font-weight:bold;transform:scaleX(0.9685);">KayitTarihi</span>
<div class="hcell" style="left:342px;top:336px;width:12px;height:19px;"></div>
<div class="cell" style="left:354px;top:336px;width:71px;height:19px;"></div>
<div class="sunk" style="left:437px;top:317px;width:142px;height:132px;"></div>
<div class="sb" style="left:561px;top:319px;width:16px;height:112px;"></div>
<div class="sb" style="left:439px;top:431px;width:139px;height:16px;"></div>
<div class="sunk" style="left:579px;top:317px;width:144px;height:132px;"></div>
<div class="sb" style="left:705px;top:319px;width:16px;height:112px;"></div>
<div class="sb" style="left:581px;top:431px;width:141px;height:16px;"></div>
<div class="sunk" style="left:340px;top:448px;width:383px;height:62px;"></div>
<div class="sb" style="left:705px;top:450px;width:16px;height:42px;"></div>
<div class="sb" style="left:342px;top:492px;width:380px;height:16px;"></div>
<span class="t" style="left:359.90px;top:513px;font-size:12px;line-height:14px;color:#000;font-weight:bold;transform:scaleX(0.9795);">Son Laktasyon</span>
<span class="t" style="left:477.70px;top:513px;font-size:12px;line-height:14px;color:#000;font-weight:bold;transform:scaleX(0.9902);">Önceki Laktasyon</span>
<span class="t" style="left:623.60px;top:513px;font-size:12px;line-height:14px;color:#000;font-weight:bold;transform:scaleX(0.9416);">TOPLAM</span>
<span class="t" style="left:343.80px;top:535px;font-size:12px;line-height:14px;color:#000;font-weight:bold;transform:scaleX(0.9169);">Gün</span>
<div class="sunk" style="left:372px;top:528px;width:58px;height:24px;"></div>
<span class="t" style="left:375.50px;top:532px;font-size:13px;line-height:15px;color:#000;font-weight:bold;transform:scaleX(0.8991);">0</span>
<span class="t" style="left:434.80px;top:533px;font-size:12px;line-height:14px;color:#000;font-weight:bold;transform:scaleX(0.9232);">gün</span>
<span class="t" style="left:343.80px;top:562px;font-size:12px;line-height:14px;color:#000;font-weight:bold;transform:scaleX(0.9306);">Litre</span>
<div class="sunk" style="left:372px;top:555px;width:58px;height:24px;"></div>
<span class="t" style="left:375.50px;top:559px;font-size:13px;line-height:15px;color:#000;font-weight:bold;transform:scaleX(1.0553);">0,00</span>
<span class="t" style="left:434.80px;top:563px;font-size:12px;line-height:14px;color:#000;font-weight:bold;transform:scaleX(0.9223);">litre</span>
<span class="t" style="left:343.80px;top:584px;font-size:13.5px;line-height:15px;color:#000;font-weight:bold;transform:scaleX(0.9167);">Ort.</span>
<div class="sunk" style="left:372px;top:580px;width:58px;height:24px;"></div>
<span class="t" style="left:375.50px;top:584px;font-size:13px;line-height:15px;color:#000;font-weight:bold;transform:scaleX(1.0553);">0,00</span>
<span class="t" style="left:434.80px;top:588px;font-size:12px;line-height:14px;color:#000;font-weight:bold;transform:scaleX(0.9223);">litre</span>
<span class="t" style="left:475.80px;top:533px;font-size:12px;line-height:14px;color:#000;font-weight:bold;transform:scaleX(0.9169);">Gün</span>
<div class="sunk" style="left:502px;top:528px;width:58px;height:24px;"></div>
<span class="t" style="left:505.50px;top:532px;font-size:13px;line-height:15px;color:#000;font-weight:bold;transform:scaleX(0.8991);">0</span>
<span class="t" style="left:563.00px;top:533px;font-size:12px;line-height:14px;color:#000;font-weight:bold;transform:scaleX(0.9232);">gün</span>
<span class="t" style="left:475.80px;top:562px;font-size:12px;line-height:14px;color:#000;font-weight:bold;transform:scaleX(0.9306);">Litre</span>
<div class="sunk" style="left:502px;top:555px;width:58px;height:24px;"></div>
<span class="t" style="left:505.50px;top:559px;font-size:13px;line-height:15px;color:#000;font-weight:bold;transform:scaleX(1.0553);">0,00</span>
<span class="t" style="left:563.00px;top:563px;font-size:12px;line-height:14px;color:#000;font-weight:bold;transform:scaleX(0.9223);">litre</span>
<span class="t" style="left:475.80px;top:584px;font-size:13.5px;line-height:15px;color:#000;font-weight:bold;transform:scaleX(0.9167);">Ort.</span>
<div class="sunk" style="left:502px;top:580px;width:58px;height:24px;"></div>
<span class="t" style="left:505.50px;top:584px;font-size:13px;line-height:15px;color:#000;font-weight:bold;transform:scaleX(1.0553);">0,00</span>
<span class="t" style="left:563.00px;top:588px;font-size:12px;line-height:14px;color:#000;font-weight:bold;transform:scaleX(0.9223);">litre</span>
<span class="t" style="left:599.00px;top:533px;font-size:12px;line-height:14px;color:#000;font-weight:bold;transform:scaleX(0.9169);">Gün</span>
<div class="sunk" style="left:627px;top:528px;width:58px;height:24px;"></div>
<span class="t" style="left:630.50px;top:532px;font-size:13px;line-height:15px;color:#000;font-weight:bold;transform:scaleX(0.8991);">0</span>
<span class="t" style="left:687.10px;top:533px;font-size:12px;line-height:14px;color:#000;font-weight:bold;transform:scaleX(0.9232);">gün</span>
<span class="t" style="left:599.00px;top:562px;font-size:12px;line-height:14px;color:#000;font-weight:bold;transform:scaleX(0.9306);">Litre</span>
<div class="sunk" style="left:627px;top:555px;width:58px;height:24px;"></div>
<span class="t" style="left:630.50px;top:559px;font-size:13px;line-height:15px;color:#000;font-weight:bold;transform:scaleX(1.0553);">0,00</span>
<span class="t" style="left:687.10px;top:563px;font-size:12px;line-height:14px;color:#000;font-weight:bold;transform:scaleX(0.9223);">litre</span>
<span class="t" style="left:599.00px;top:584px;font-size:13.5px;line-height:15px;color:#000;font-weight:bold;transform:scaleX(0.9167);">Ort.</span>
<div class="sunk" style="left:627px;top:582px;width:58px;height:24px;"></div>
<span class="t" style="left:630.50px;top:586px;font-size:13px;line-height:15px;color:#000;font-weight:bold;transform:scaleX(1.0553);">0,00</span>
<span class="t" style="left:687.10px;top:588px;font-size:12px;line-height:14px;color:#000;font-weight:bold;transform:scaleX(0.9223);">litre</span>
<div class="" style="left:730px;top:101px;width:323px;height:248px;background:#a0a0a4;"></div>
<span class="t" style="left:746.00px;top:107px;font-size:14px;line-height:16px;color:#000;transform:scaleX(1.1130);text-shadow:0.4px 0 0 #000;">Yaptığı Doğumlar</span>
<div class="sunk" style="left:734px;top:123px;width:311px;height:139px;"></div>
<div class="hcell" style="left:736px;top:125px;width:12px;height:18px;background:#ff0000;border-color:#ff6060 #000 #000 #ff6060;"></div>
<div class="hcell" style="left:736px;top:143px;width:12px;height:18px;background:#ff0000;border-color:#ff6060 #000 #000 #ff6060;"></div>
<div class="hcell" style="left:748px;top:125px;width:82px;height:18px;background:#ff0000;border-color:#ff6060 #000 #000 #ff6060;"></div>
<span class="t" style="left:769.85px;top:127px;font-size:12px;line-height:14px;color:#000;font-weight:bold;transform:scaleX(1.0051);">DTarih</span>
<div class="cell" style="left:748px;top:143px;width:82px;height:18px;"></div>
<div class="hcell" style="left:830px;top:125px;width:37px;height:18px;background:#ff0000;border-color:#ff6060 #000 #000 #ff6060;"></div>
<span class="t" style="left:837.70px;top:127px;font-size:12px;line-height:14px;color:#000;font-weight:bold;transform:scaleX(0.9360);">Dişi</span>
<div class="cell" style="left:830px;top:143px;width:37px;height:18px;"></div>
<div class="hcell" style="left:867px;top:125px;width:35px;height:18px;background:#ff0000;border-color:#ff6060 #000 #000 #ff6060;"></div>
<span class="t" style="left:868.00px;top:127px;font-size:12px;line-height:14px;color:#000;font-weight:bold;transform:scaleX(0.9787);">Erkek</span>
<div class="cell" style="left:867px;top:143px;width:35px;height:18px;"></div>
<div class="hcell" style="left:902px;top:125px;width:51px;height:18px;background:#ff0000;border-color:#ff6060 #000 #000 #ff6060;"></div>
<span class="t" style="left:907.00px;top:127px;font-size:12px;line-height:14px;color:#000;font-weight:bold;transform:scaleX(0.9575);">Toplam</span>
<div class="cell" style="left:902px;top:143px;width:51px;height:18px;"></div>
<div class="hcell" style="left:953px;top:125px;width:70px;height:18px;background:#ff0000;border-color:#ff6060 #000 #000 #ff6060;"></div>
<span class="t" style="left:955.00px;top:127px;font-size:12px;line-height:14px;color:#000;font-weight:bold;transform:scaleX(0.9652);">Doğum Sıra</span>
<div class="cell" style="left:953px;top:143px;width:70px;height:18px;"></div>
<div class="sunk" style="left:734px;top:265px;width:313px;height:80px;"></div>
<div class="sb" style="left:1029px;top:267px;width:16px;height:60px;"></div>
<div class="sb" style="left:736px;top:327px;width:310px;height:16px;"></div>
<div class="" style="left:729px;top:349px;width:323px;height:260px;background:#3399ff;"></div>
<span class="t" style="left:813.60px;top:353px;font-size:14px;line-height:16px;color:#000;transform:scaleX(1.0991);text-shadow:0.4px 0 0 #000;">Uygulanan Aşıları</span>
<div class="" style="left:731px;top:376px;width:319px;height:148px;background:#fff;border-top:1px solid #696969;border-left:1px solid #696969;"></div>
<div class="hcell" style="left:732px;top:378px;width:13px;height:17px;"></div>
<div class="hcell" style="left:732px;top:395px;width:13px;height:18px;"></div>
<div class="hcell" style="left:745px;top:378px;width:73px;height:17px;"></div>
<span class="t" style="left:767.50px;top:380px;font-size:12px;line-height:14px;color:#000;font-weight:bold;transform:scaleX(0.9843);">Tarih</span>
<div class="cell" style="left:745px;top:395px;width:73px;height:18px;"></div>
<span class="t" style="left:748.20px;top:398px;font-size:12px;line-height:14px;color:#000;font-weight:bold;transform:scaleX(1.0329);">2019-02-02</span>
<div class="hcell" style="left:818px;top:378px;width:120px;height:17px;"></div>
<span class="t" style="left:825.15px;top:380px;font-size:12px;line-height:14px;color:#000;font-weight:bold;transform:scaleX(0.9633);">Uygulanan Aşı İsmi</span>
<div class="cell" style="left:818px;top:395px;width:120px;height:18px;"></div>
<span class="t" style="left:821.20px;top:398px;font-size:12px;line-height:14px;color:#000;font-weight:bold;transform:scaleX(0.9471);">Karma Aşı</span>
<div class="hcell" style="left:938px;top:378px;width:97px;height:17px;"></div>
<span class="t" style="left:943.40px;top:380px;font-size:12px;line-height:14px;color:#000;font-weight:bold;transform:scaleX(0.9774);">Uygulama Şekli</span>
<div class="cell" style="left:938px;top:395px;width:97px;height:18px;"></div>
<span class="t" style="left:941.70px;top:398px;font-size:12px;line-height:14px;color:#000;font-weight:bold;">Deri altı</span>
<div class="sunk" style="left:731px;top:524px;width:320px;height:83px;"></div>
<span class="t" style="left:733.60px;top:528px;font-size:13.5px;line-height:15px;color:#000;transform:scaleX(1.1146);text-shadow:0.4px 0 0 #000;">Tüm Sürü Aşıland</span>
<svg style="position:absolute;left:0px;top:0px" width="1073" height="632" viewBox="0 0 1073 632"><path d="M344.5 340.4L351.5 346L344.5 351.6Z" fill="#000"/><path d="M565.98 330.2L569.5 325.8L573.02 330.2Z" fill="#8c8c8c"/><path d="M565.98 420.8L569.5 425.2L573.02 420.8Z" fill="#8c8c8c"/><path d="M450.2 435.98L445.8 439.5L450.2 443.02Z" fill="#8c8c8c"/><path d="M549.8 435.98L554.2 439.5L549.8 443.02Z" fill="#8c8c8c"/><path d="M709.98 330.2L713.5 325.8L717.02 330.2Z" fill="#8c8c8c"/><path d="M709.98 420.8L713.5 425.2L717.02 420.8Z" fill="#8c8c8c"/><path d="M592.2 435.98L587.8 439.5L592.2 443.02Z" fill="#8c8c8c"/><path d="M693.8 435.98L698.2 439.5L693.8 443.02Z" fill="#8c8c8c"/><path d="M709.98 461.2L713.5 456.8L717.02 461.2Z" fill="#8c8c8c"/><path d="M709.98 481.8L713.5 486.2L717.02 481.8Z" fill="#8c8c8c"/><path d="M353.2 496.98L348.8 500.5L353.2 504.02Z" fill="#8c8c8c"/><path d="M693.8 496.98L698.2 500.5L693.8 504.02Z" fill="#8c8c8c"/><path d="M739 146.4L746 152L739 157.6Z" fill="#000"/><path d="M1033.98 278.2L1037.5 273.8L1041.02 278.2Z" fill="#8c8c8c"/><path d="M1033.98 316.8L1037.5 321.2L1041.02 316.8Z" fill="#8c8c8c"/><path d="M747.2 331.98L742.8 335.5L747.2 339.02Z" fill="#8c8c8c"/><path d="M1017.8 331.98L1022.2 335.5L1017.8 339.02Z" fill="#8c8c8c"/><path d="M735 398.4L742 404L735 409.6Z" fill="#000"/><path d="M798.3 76.2L800.8 78.7L805 74.2" fill="none" stroke="#000" stroke-width="2"/></svg>
</body></html>
